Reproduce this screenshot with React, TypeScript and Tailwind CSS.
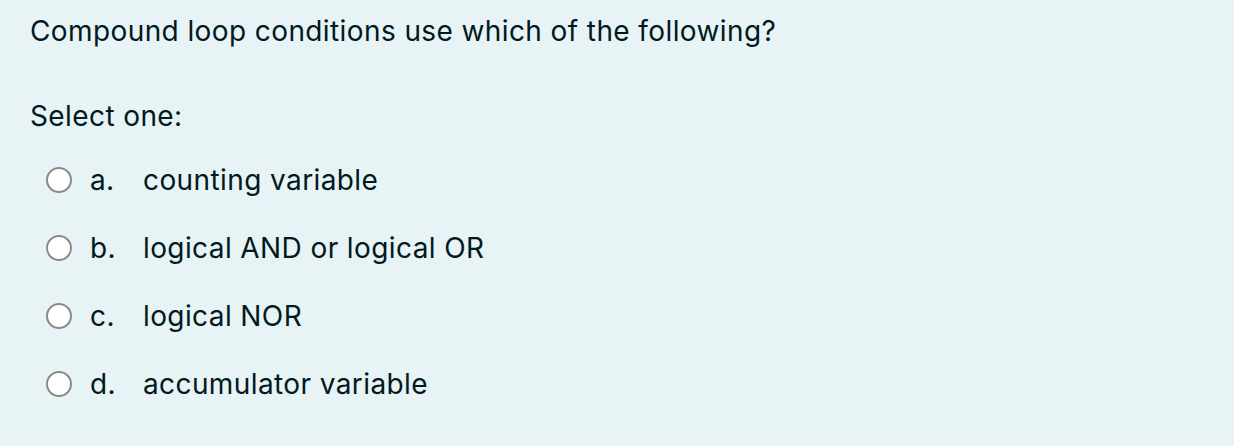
import React from 'react';

const options = [
  { letter: 'a.', text: 'counting variable' },
  { letter: 'b.', text: 'logical AND or logical OR' },
  { letter: 'c.', text: 'logical NOR' },
  { letter: 'd.', text: 'accumulator variable' },
];

export default function App() {
  return (
    <div
      className="w-[1234px] h-[446px] bg-[#e7f3f5] text-[#001a1e] pl-[30px] pt-[12px] tracking-[0.4px]"
      style={{ fontFamily: 'Inter, "Liberation Sans", Arial, sans-serif' }}
    >
      <p className="text-[28px] leading-[38px]">Compound loop conditions use which of the following?</p>
      <p className="text-[28px] leading-[38px] mt-[47px]">Select one:</p>
      <div className="mt-[11px] flex flex-col">
        {options.map((opt, index) => (
          <label key={index} className="flex items-center h-[68px] pl-[16px] text-[28px]">
            <span className="w-[26px] h-[26px] rounded-full border-2 border-[#8a8a8a] bg-white shrink-0" />
            <span className="ml-[18px] w-[53px]">{opt.letter}</span>
            <span>{opt.text}</span>
          </label>
        ))}
      </div>
    </div>
  );
}
